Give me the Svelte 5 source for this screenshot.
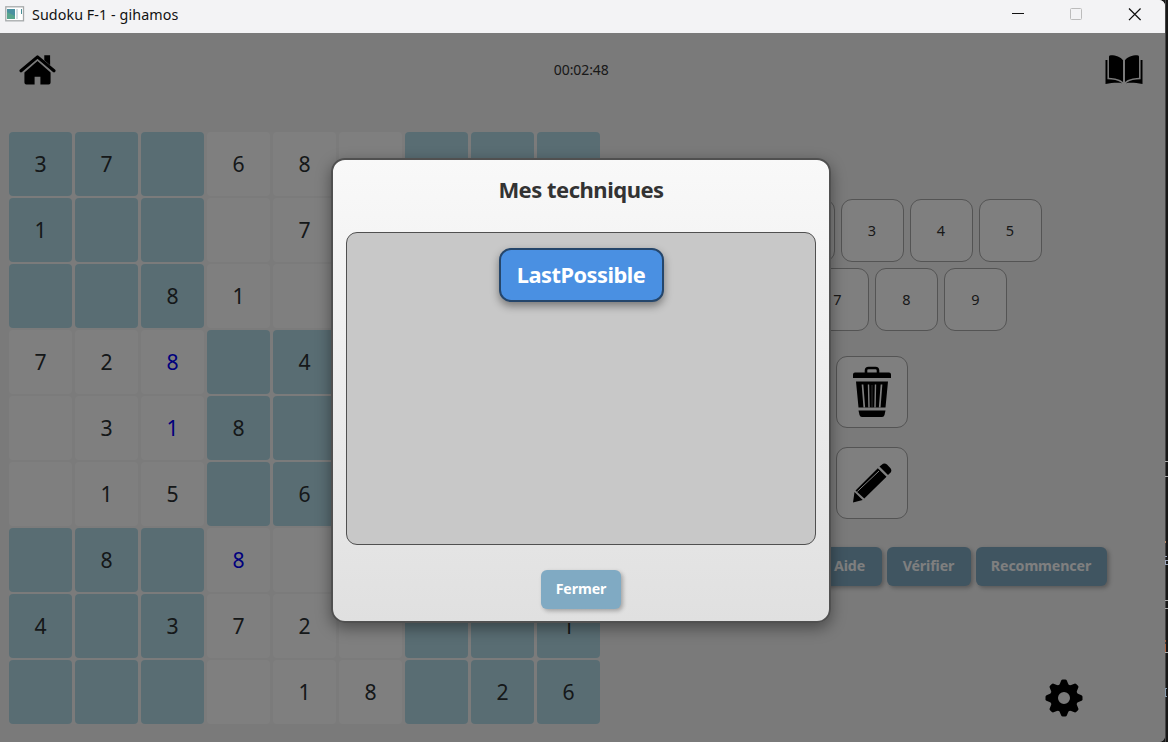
<script>
  const rows = ['37.68....', '1...7....', '..81.....', '728.4....', '.318.....', '.15.6....', '.8.8.....', '4.372...1', '....18.26'];
  const entered = new Set(['3-2', '4-2', '6-3']);
  const cells = rows.flatMap((row, r) =>
    [...row].map((v, c) => ({
      value: v === '.' ? '' : v,
      shaded: (Math.floor(r / 3) + Math.floor(c / 3)) % 2 === 0,
      entered: entered.has(`${r}-${c}`)
    }))
  );
  const teeth = [0, 45, 90, 135, 180, 225, 270, 315];
  // fragments of the editor window that is behind this one
  const marks = [
    { y: 461, h: 1, w: 3, c: '#aaa' }, { y: 476, h: 1, w: 3, c: '#aaa' }, { y: 541, h: 2, w: 1, c: '#b78765' },
    { y: 556, h: 1, w: 2, c: '#9aa3b8' }, { y: 560, h: 1, w: 3, c: '#9aa3b8' }, { y: 561, h: 3, w: 1, c: '#9aa3b8' }, { y: 564, h: 1, w: 3, c: '#9aa3b8' },
    { y: 600, h: 1, w: 3, c: '#aaa' }, { y: 608, h: 1, w: 3, c: '#aaa' },
    { y: 640, h: 2, w: 1, c: '#a5603d' }, { y: 644, h: 8, w: 1, c: '#a5603d' },
    { y: 652, h: 1, w: 3, c: '#aaa' }, { y: 688, h: 1, w: 2, c: '#8799aa' }, { y: 689, h: 7, w: 1, c: '#8799aa' }, { y: 696, h: 1, w: 2, c: '#8799aa' }
  ];
</script>

<div class="desktop">
  <svg class="behind" width="3" height="742" viewBox="0 0 3 742" shape-rendering="crispEdges">
    <rect width="1" height="742" fill="#444" />
    {#each marks as m}<rect x="0" y={m.y} width={m.w} height={m.h} fill={m.c} />{/each}
  </svg>
  <main class="window">
    <header class="titlebar">
      <svg width="20" height="16" viewBox="0 0 20 16">
        <rect x=".8" y=".8" width="17.7" height="14" fill="#fff" stroke="#a5a9aa" stroke-width="1.3" />
        <rect x="2" y="3" width="8" height="10" fill="#4a91a0" />
        <path d="M2 6v7h8v-3z" fill="#58a58d" />
        <path d="M12 3v10" stroke="#d5dfe3" stroke-width="2" /><path d="M16.5 3v5" stroke="#4a8f98" />
      </svg>
      <span class="title">Sudoku F-1 - gihamos</span>
      <div class="controls">
        <svg width="13" height="13" viewBox="0 0 13 13"><path d="M0 5.5h12" stroke="#111" /></svg>
        <svg width="13" height="13" viewBox="0 0 13 13"><rect x=".5" y=".5" width="11" height="11" rx="1" fill="none" stroke="#bcbcbc" /></svg>
        <svg width="13" height="13" viewBox="0 0 13 13"><path d="M1 .5l11.600 11.600M12.600.5L1 12.100" stroke="#111" stroke-width="1.3" /></svg>
      </div>
    </header>

    <section class="game">
      <div class="top">
        <svg width="37" height="31" viewBox="0 0 38 32">
          <path d="M5.5 18 19 6.3 32.500 18v10.500q0 2-2 2H22V22.500H16v8H7.500q-2 0-2-2z" />
          <path d="M2 16.300 19 2 36 16.300" fill="none" stroke="#000" stroke-width="3.200" stroke-linecap="round" stroke-linejoin="round" />
          <path d="M26 .3h6v10.400L26 5.500z" />
          <path d="M4.500 17.300 19 5.200 33.500 17.300" fill="none" stroke="#f4f4f4" stroke-width=".8" />
        </svg>
        <span class="timer">00:02:48</span>
        <svg width="38" height="30" viewBox="0 0 38 30">
          <path d="M4 1.500Q4.200.3 6 .3c5 0 9.500 1.500 12 5V27C14.500 23.800 10 23.300 4 22.700zM34 1.500Q33.800.3 32 .3c-5 0-9.500 1.500-12 5V27c3.500-3.200 8-3.700 14-4.300z" />
          <path d="M.5 5H2.400V24.300C8 24.300 13 25 17.200 28.300 12 27.200 7 28 .5 29zM37.500 5H35.600V24.300C30 24.300 25 25 20.800 28.300c5.200-1.100 10.200-.3 16.700.7z" />
        </svg>
      </div>
      <div class="body">
        <div class="grid">
          {#each cells as cell}
            <div class="cell" class:shaded={cell.shaded} class:entered={cell.entered}><span>{cell.value}</span></div>
          {/each}
        </div>
        <div class="side">
          <div class="keys">
            {#each [1, 2, 3, 4, 5, 6, 7, 8, 9] as n}<button class="key">{n}</button>{/each}
          </div>
          <button class="tool" aria-label="Effacer">
            <svg width="40" height="52" viewBox="0 0 40 52">
              <path d="M14 7V4.500Q14 2 16.500 2h7Q26 2 26 4.500V7" fill="none" stroke="#000" stroke-width="2.600" />
              <path d="M3 6.500h34q2 0 2 2V12H1V8.500q0-2 2-2zM4 15.500h32L33.500 41.500H6.500zM6.500 44.500h27L32.500 49q-.5 2-2.500 2H10q-2 0-2.500-2z" />
              <path d="M10.500 18.500 12.300 41.500M29.500 18.500 27.700 41.500" stroke="#fff" stroke-width="1.700" />
              <path d="M16.500 18.500 17 41.500M23.500 18.500 23 41.500" stroke="#fff" stroke-width="1.400" />
              <path d="M20 19v22" stroke="#888" stroke-width=".7" />
            </svg>
          </button>
          <button class="tool" aria-label="Annoter">
            <svg width="40" height="40" viewBox="0 0 40 40">
              <path d="M27.500 3.500 31 .8q2-.9 4 .7l3.500 3.700q1.500 2 .4 4L36 12zM25.800 5.300 34.500 13.700 12.300 35.500 3.500 27.500zM2.500 29 10.700 37 1 39.500z" />
              <path d="M5.300 28.500 27 8" stroke="#fff" stroke-width="1" />
            </svg>
          </button>
          <div class="actions">
            <button class="action help">Aide</button><button class="action check">Vérifier</button><button class="action restart">Recommencer</button>
          </div>
          <div class="settings">
            <svg width="38" height="38" viewBox="-19 -19 38 38">
              <circle r="10" fill="none" stroke="#000" stroke-width="8" />
              {#each teeth as a}<path d="M-5.500-11 -2.800-17.500Q-2.300-18.500-1.300-18.500H1.300Q2.300-18.500 2.800-17.500L5.500-11z" transform="rotate({a})" />{/each}
            </svg>
          </div>
        </div>
      </div>
      <div class="shade"></div>
    </section>

    <div class="dialog" role="dialog" aria-label="Mes techniques">
      <h1>Mes techniques</h1>
      <div class="list"><button class="technique">LastPossible</button></div>
      <button class="action close">Fermer</button>
    </div>
  </main>
</div>

<style>
  :global(body) { margin: 0; background: #171717; overflow: hidden; }
  * { box-sizing: border-box; }
  svg { display: block; flex: none; }
  button { font: inherit; padding: 0; }
  .desktop { width: 1168px; height: 742px; background: #171717; position: relative; font-family: "Noto Sans", "Open Sans", sans-serif; }
  .behind { position: absolute; right: 0; top: 0; }
  .window { position: relative; width: 1165px; height: 742px; overflow: hidden; border-radius: 0 6px 6px 0; display: flex; flex-direction: column; background: #f4f4f4; }
  .titlebar { height: 33px; flex: none; display: flex; align-items: center; padding: 0 24px 5px 5px; background: #f3f3f5; color: #111; }
  .title { margin-left: 7px; font-size: 14.3px; letter-spacing: .08px; line-height: 20px; padding-top: 1px; }
  .controls { margin-left: auto; display: flex; gap: 45px; }
  .game { position: relative; flex: 1; display: flex; flex-direction: column; }
  .top { height: 99px; flex: none; display: flex; align-items: flex-start; justify-content: space-between; padding: 22px 21.500px 0 19px; }
  .timer { font-size: 14px; line-height: 20px; letter-spacing: -.08px; color: #333; margin: 5px 0 0 1px; }
  .body { display: flex; flex: 1; }
  .grid { display: grid; grid-template-columns: repeat(9, 63px); grid-auto-rows: 64px; gap: 2px 3px; margin-left: 9px; align-self: flex-start; background: #f7f7f7; }
  .cell { display: flex; align-items: center; justify-content: center; border-radius: 4px; background: #fff; font-size: 22.500px; line-height: 30px; color: #2b3033; padding: 0 1px 1px 0; }
  .cell span { transform: scaleX(.94); }
  .shaded { background: #b3dbe7; }
  .entered { color: #0000fa; }
  .side { flex: 1; margin-left: 14px; padding: 67px 35px 0 0; display: flex; flex-direction: column; align-items: center; }
  .keys { width: 345px; display: flex; flex-wrap: wrap; justify-content: center; gap: 6px; }
  .key, .tool { background: #fff; border: 1px solid #a8a8a8; border-radius: 11px; color: #333; }
  .key { width: 63px; height: 63px; font-size: 14.5px; padding: 0 0 1px 0; }
  .tool { width: 72px; height: 72px; margin-top: 19px; display: flex; align-items: center; justify-content: center; }
  .keys + .tool { margin-top: 25px; }
  .actions { align-self: flex-end; display: flex; gap: 5px; margin: 28px 23.500px 0 0; }
  .action { height: 39px; border: 0; border-radius: 6px; background: #80aac3; color: #fff; font-weight: 700; font-size: 14.2px; letter-spacing: -.1px; box-shadow: 2px 2px 4px rgba(0, 0, 0, .28); padding: 0 0 3px 0; }
  .help { width: 64px; } .check { width: 84px; } .restart { width: 131px; }
  .settings { align-self: flex-end; margin: 92.500px 47.500px 0 0; }
  .shade { position: absolute; inset: 0; background: rgba(0, 0, 0, .5); }
  .dialog { position: absolute; left: 331px; top: 158px; width: 500px; height: 465px; border: 2px solid #505050; border-radius: 14px; background: linear-gradient(#f9f9f9, #e0e0e0); box-shadow: 0 5px 15px rgba(0, 0, 0, .4); display: flex; flex-direction: column; align-items: center; }
  h1 { margin: 12px 0 0; height: 61px; font-size: 22px; line-height: 34px; letter-spacing: -.5px; color: #333; font-weight: 700; }
  .list { width: 470px; height: 313px; margin-top: -1px; border: 1px solid #505050; border-radius: 11px; background: #c8c8c8; padding-top: 15px; display: flex; justify-content: center; align-items: flex-start; }
  .technique { width: 165px; height: 54px; border: 2px solid #25466b; border-radius: 12px; background: #4a90e2; color: #fff; font-size: 21.800px; font-weight: 700; letter-spacing: -.5px; box-shadow: 0 4px 8px rgba(0, 0, 0, .4); padding-bottom: 2px; }
  .close { width: 80px; margin-top: 25px; }
</style>
